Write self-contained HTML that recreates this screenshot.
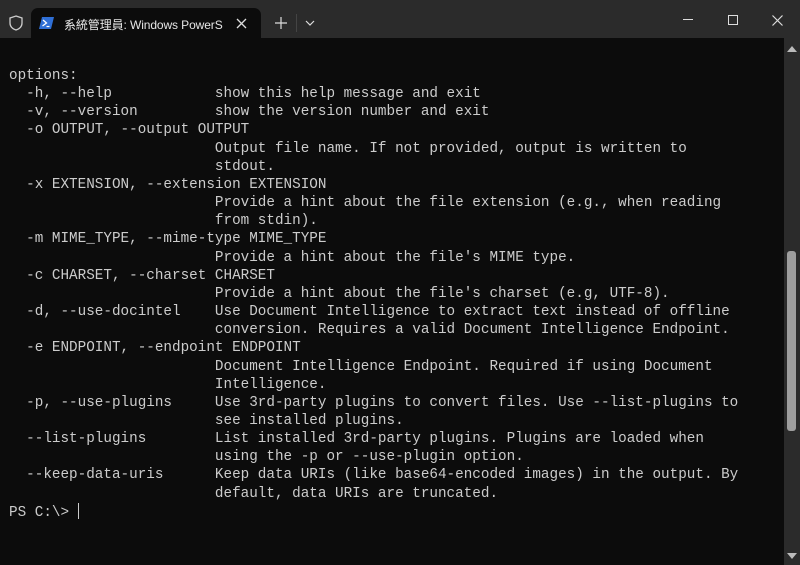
<!DOCTYPE html>
<html><head><meta charset="utf-8"><style>
*{margin:0;padding:0;box-sizing:border-box}
body{width:800px;height:565px;background:#0c0c0c;overflow:hidden;position:relative;font-family:"Liberation Sans","Noto Sans CJK TC",sans-serif}
.top{position:absolute;left:0;top:0;width:800px;height:38px;background:#2b2b2b}
.tab{position:absolute;left:31px;top:8px;width:230px;height:31px;background:#0c0c0c;border-radius:7px 7px 0 0}
.tab .t{position:absolute;left:33px;top:8px;color:#e6e6e6;font-size:12px;letter-spacing:-0.1px}
pre{position:absolute;left:9px;top:67px;font-family:"Liberation Mono",monospace;font-size:14.3px;line-height:18.15px;color:#cccccc}
.sb{position:absolute;left:784px;top:38px;width:16px;height:527px;background:#2b2b2b}
.th{position:absolute;left:787px;top:251px;width:9px;height:180px;background:#9e9e9e;border-radius:3px}
</style></head><body>
<div class="top">
<svg style="position:absolute;left:9px;top:15px" width="14" height="16" viewBox="0 0 14 16"><path d="M7 1 L13 3 V8 C13 12 10 14 7 15 C4 14 1 12 1 8 V3 Z" fill="none" stroke="#ccc" stroke-width="1.3"/></svg>
<div class="tab">
<svg style="position:absolute;left:8px;top:9px" width="15" height="12" viewBox="0 0 15 12"><path d="M3 0 H15 L12 12 H0 Z" fill="#2f6fd6"/><path d="M4 3 L7.5 6 L3.5 9" fill="none" stroke="#fff" stroke-width="1.3"/><path d="M7.5 9.5 H10.5" stroke="#fff" stroke-width="1.2"/></svg>
<span class="t">系統管理員: Windows PowerS</span>
<svg style="position:absolute;left:205px;top:10px" width="11" height="11" viewBox="0 0 11 11"><path d="M1 1 L10 10 M10 1 L1 10" stroke="#ddd" stroke-width="1.3"/></svg>
</div>
<svg style="position:absolute;left:275px;top:17px" width="12" height="12" viewBox="0 0 12 12"><path d="M6 0 V12 M0 6 H12" stroke="#ddd" stroke-width="1.2"/></svg>
<div style="position:absolute;left:296px;top:14px;width:1px;height:18px;background:#444"></div>
<svg style="position:absolute;left:305px;top:20px" width="10" height="6" viewBox="0 0 10 6"><path d="M1 1 L5 5 L9 1" fill="none" stroke="#ddd" stroke-width="1.2"/></svg>
<div style="position:absolute;left:683px;top:19px;width:10px;height:1px;background:#ddd"></div>
<div style="position:absolute;left:728px;top:15px;width:10px;height:10px;border:1.2px solid #ddd"></div>
<svg style="position:absolute;left:772px;top:15px" width="11" height="11" viewBox="0 0 11 11"><path d="M0.5 0.5 L10.5 10.5 M10.5 0.5 L0.5 10.5" stroke="#ddd" stroke-width="1.2"/></svg>
</div>
<pre>options:
  -h, --help            show this help message and exit
  -v, --version         show the version number and exit
  -o OUTPUT, --output OUTPUT
                        Output file name. If not provided, output is written to
                        stdout.
  -x EXTENSION, --extension EXTENSION
                        Provide a hint about the file extension (e.g., when reading
                        from stdin).
  -m MIME_TYPE, --mime-type MIME_TYPE
                        Provide a hint about the file's MIME type.
  -c CHARSET, --charset CHARSET
                        Provide a hint about the file's charset (e.g, UTF-8).
  -d, --use-docintel    Use Document Intelligence to extract text instead of offline
                        conversion. Requires a valid Document Intelligence Endpoint.
  -e ENDPOINT, --endpoint ENDPOINT
                        Document Intelligence Endpoint. Required if using Document
                        Intelligence.
  -p, --use-plugins     Use 3rd-party plugins to convert files. Use --list-plugins to
                        see installed plugins.
  --list-plugins        List installed 3rd-party plugins. Plugins are loaded when
                        using the -p or --use-plugin option.
  --keep-data-uris      Keep data URIs (like base64-encoded images) in the output. By
                        default, data URIs are truncated.
PS C:\> <span style="display:inline-block;width:1px;height:16px;background:#ccc;vertical-align:-3px"></span></pre>
<div class="sb"></div>
<div class="th"></div>
<svg style="position:absolute;left:787px;top:46px" width="10" height="6" viewBox="0 0 10 6"><path d="M5 0 L10 6 H0 Z" fill="#bbb"/></svg>
<svg style="position:absolute;left:787px;top:553px" width="10" height="6" viewBox="0 0 10 6"><path d="M0 0 H10 L5 6 Z" fill="#bbb"/></svg>
</body></html>
